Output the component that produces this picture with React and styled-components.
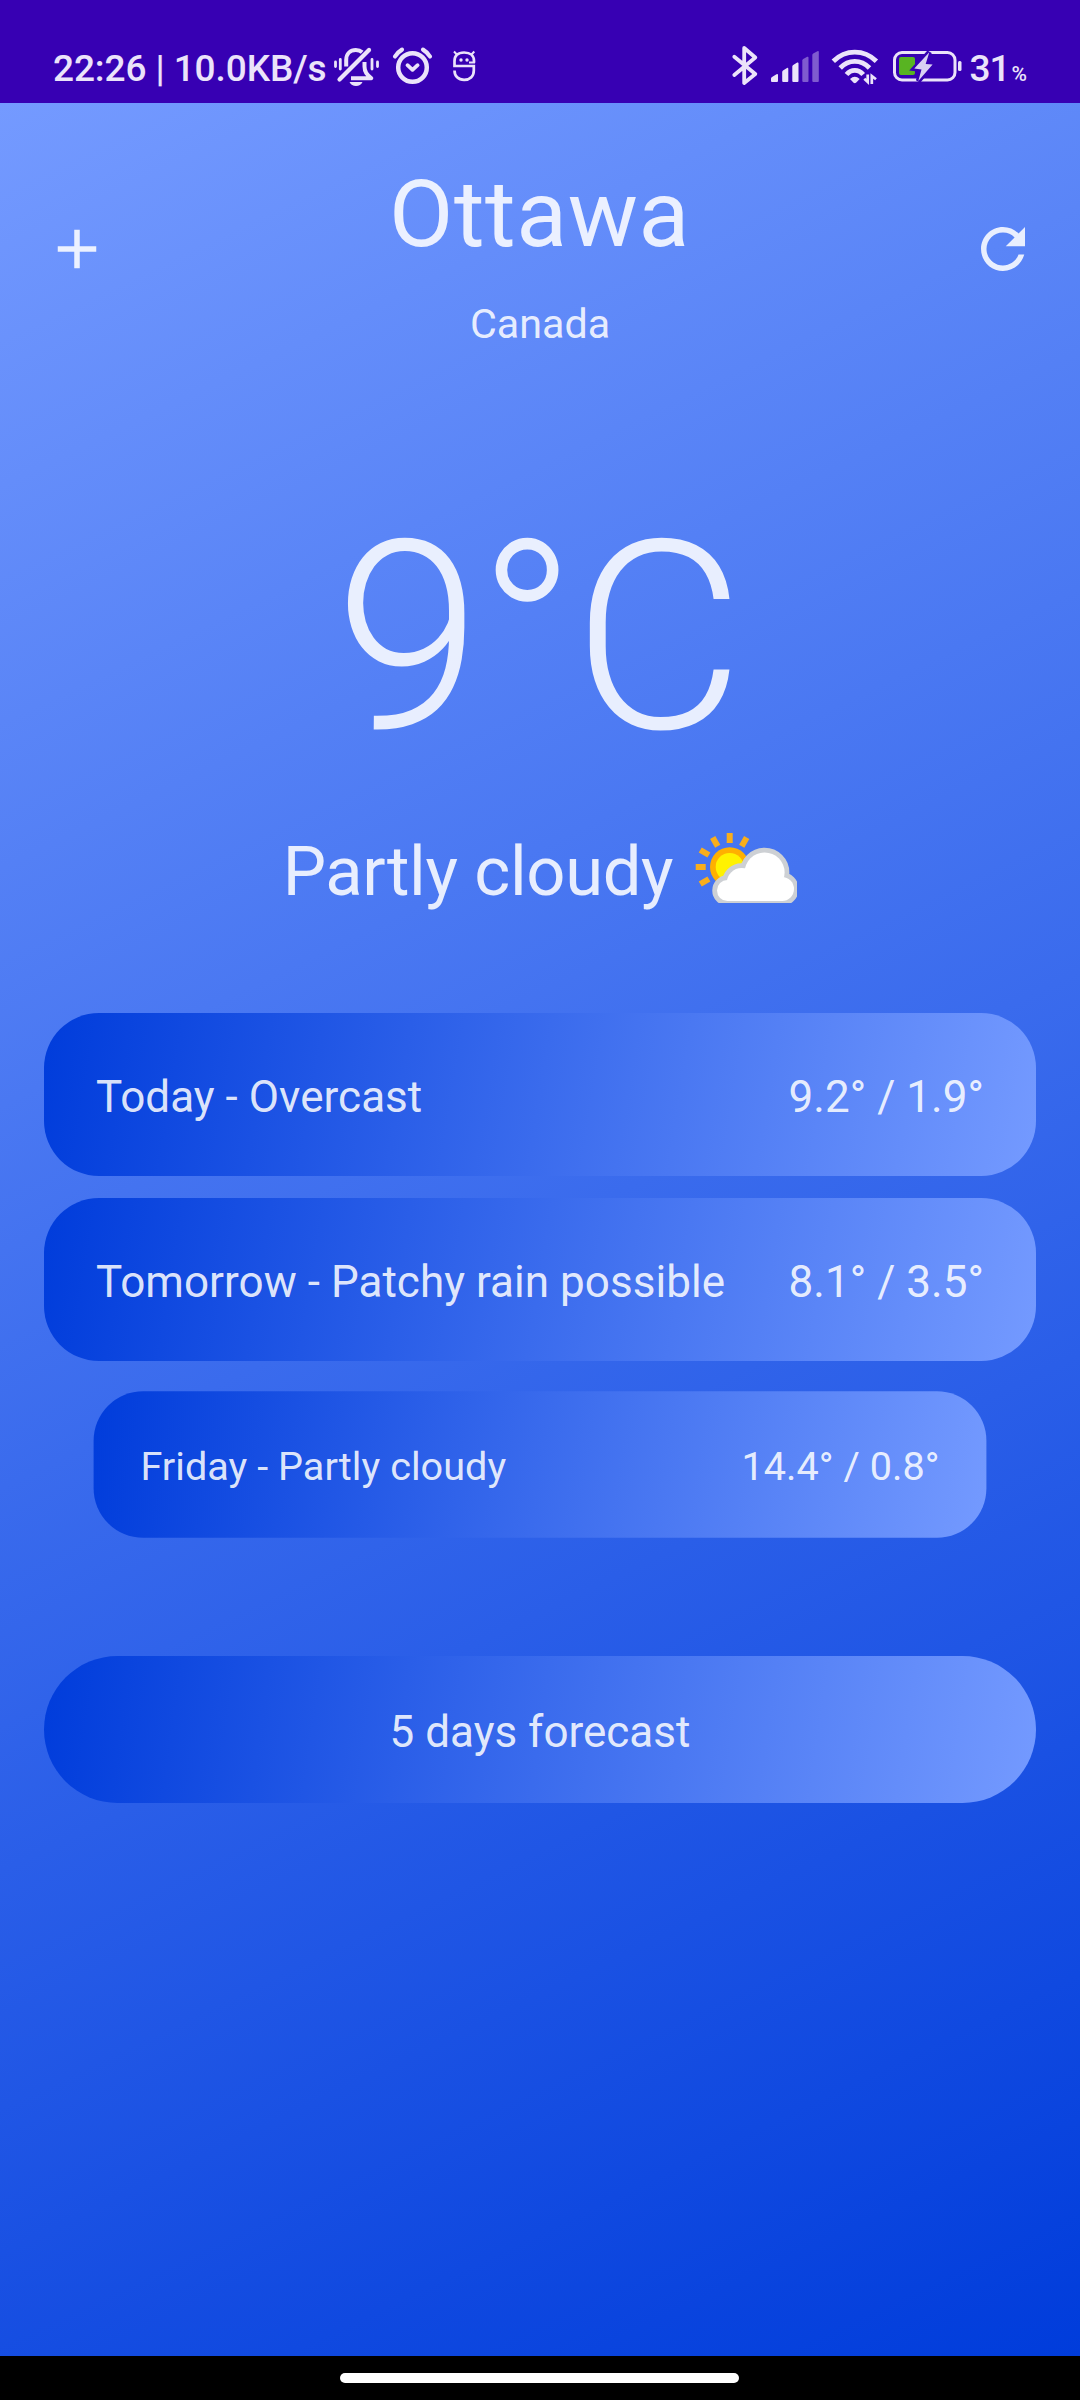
import React from "react";
import styled, { createGlobalStyle } from "styled-components";

const INK = "#ebe3fa";

const GlobalStyle = createGlobalStyle`
  * { box-sizing: border-box; }
  body { margin: 0; background: #000; }
`;

const Screen = styled.div`
  display: flex;
  flex-direction: column;
  width: 1080px;
  height: 2400px;
  overflow: hidden;
  font-family: Roboto, "Noto Sans", sans-serif;
  color: rgba(255, 255, 255, 0.87);
`;

const StatusBar = styled.header`
  display: flex;
  justify-content: space-between;
  height: 103px;
  padding: 46px 53px 0;
  background: #3700b3;
  color: ${INK};
`;

const StatusGroup = styled.div`
  display: flex;
  align-items: flex-start;
`;

const Clock = styled.span`
  width: 281px;
  font-size: 37px;
  font-weight: 500;
  line-height: 45px;
  letter-spacing: -0.1px;
  white-space: nowrap;
`;

const Percent = styled.span`
  margin-left: 6px;
  font-size: 37px;
  font-weight: 500;
  line-height: 45px;
  letter-spacing: -1px;
  white-space: nowrap;

  small {
    margin-left: 2px;
    font-size: 21px;
    letter-spacing: 0;
  }
`;

const Glyph = styled.svg`
  display: block;
  flex: none;
  width: ${(p) => p.$w}px;
  height: ${(p) => p.$h}px;
  margin: ${(p) => p.$top || 0}px 0 0 ${(p) => p.$left || 0}px;
  overflow: visible;
`;

const Weather = styled.main`
  display: flex;
  flex-direction: column;
  height: 2253px;
  padding: 47px 44px 0;
  background: linear-gradient(154.4deg, #749aff, #003cdb);
`;

const TopBar = styled.div`
  display: flex;
  align-items: center;
  justify-content: space-between;
  height: 198px;
`;

const IconButton = styled.button`
  display: flex;
  padding: 0;
  border: 0;
  background: none;
  color: inherit;

  svg {
    width: 66px;
    height: 66px;
    fill: currentColor;
  }
`;

const Place = styled.div`
  display: flex;
  flex-direction: column;
  align-items: center;
  gap: 31px;
  padding-top: 9px;
`;

const City = styled.h1`
  margin: 0;
  padding-right: 1px;
  font-size: 93.5px;
  font-weight: 400;
  line-height: 110px;
  letter-spacing: 0.6px;
`;

const Country = styled.span`
  font-size: 41.25px;
  line-height: 48px;
`;

const Temperature = styled.div`
  margin-top: 135px;
  padding-right: 5px;
  font-size: 264px;
  font-weight: 325;
  line-height: 310px;
  letter-spacing: -4.125px;
  text-align: center;
`;

const Condition = styled.div`
  display: flex;
  align-items: flex-start;
  justify-content: center;
  margin-top: 39px;
  font-size: 68.75px;
  line-height: 80px;
  letter-spacing: -0.36px;
`;

const Days = styled.ul`
  display: flex;
  flex-direction: column;
  gap: 22px;
  margin: 101px 0 0;
  padding: 0;
  list-style: none;
`;

const Day = styled.li`
  display: flex;
  align-items: center;
  justify-content: space-between;
  height: 163px;
  padding: 4px 52px 0;
  border-radius: 55px;
  background: linear-gradient(99.3deg, #003cdb, #749aff);
  font-size: 44px;
  line-height: 52px;
  letter-spacing: 0.04px;
  transform: scale(${(p) => p.$scale});
`;

const ForecastButton = styled.button`
  height: 147px;
  margin-top: 110px;
  padding: 4px 0 0;
  border: 0;
  border-radius: 74px;
  background: linear-gradient(98.4deg, #003cdb, #749aff);
  color: inherit;
  font: 400 44px/52px Roboto, "Noto Sans", sans-serif;
`;

const NavBar = styled.footer`
  display: flex;
  justify-content: center;
  height: 44px;
  padding: 17px 1px 0 0;
  background: #000;
`;

const HomeHandle = styled.div`
  width: 399px;
  height: 10px;
  border-radius: 5px;
  background: #fff;
`;

const days = [
  { label: "Today - Overcast", range: "9.2° / 1.9°", scale: 1 },
  { label: "Tomorrow - Patchy rain possible", range: "8.1° / 3.5°", scale: 1 },
  { label: "Friday - Partly cloudy", range: "14.4° / 0.8°", scale: 0.9 },
];

function SilentIcon() {
  return (
    <Glyph $w={46} $h={40} $top={2} viewBox="0 0 46 40" fill="none" stroke={INK} strokeLinecap="round">
      <path d="M12.2 18.5V12C12.2 5.500 16.500 2 21.800 2C24.500 2 26.500 2.700 28.200 4.300" strokeWidth="4" strokeLinecap="butt" />
      <path d="M5.500 31.500L35 2" strokeWidth="4.200" />
      <path d="M30.500 14V18.500C30.500 24 33 26.500 37.300 30.300H17" strokeWidth="4" strokeLinejoin="round" strokeLinecap="butt" />
      <path d="M15.500 34H28.500C26.500 39.300 17.500 39.300 15.500 34Z" fill={INK} stroke="none" />
      <path d="M1.500 14V18.500M6.300 11.500V21M38 11.500V21M43.500 14V18.500" strokeWidth="2.800" />
    </Glyph>
  );
}

function AlarmIcon() {
  return (
    <Glyph $w={42} $h={40} $left={12} viewBox="0 0 42 40" fill="none" stroke={INK} strokeLinecap="round" strokeLinejoin="round">
      <circle cx="20.500" cy="21.500" r="14.300" strokeWidth="4.500" />
      <path d="M15.500 19.200L20.500 23.800L25.600 19.200" strokeWidth="3.800" />
      <path d="M3 10.500Q5.500 6.300 10 3.600M31 3.600Q35.500 6.300 38 10.500" strokeWidth="4.200" />
    </Glyph>
  );
}

function RobotIcon() {
  return (
    <Glyph $w={24} $h={32} $left={18} $top={4} viewBox="0 0 24 32" fill="none" stroke={INK} strokeWidth="2.700">
      <path d="M22 12.700V11C22 5.500 18.500 2.500 12.100 2.500C5.700 2.500 2.500 5.500 2.500 11V16H21.800V20.500C21.800 26.500 17.800 29.800 12.100 29.800C6.300 29.800 2.500 26.300 2.500 20.500" />
      <path d="M23 12.600H17M2 1.500L4.800 4.500M22.300 1.500L19.500 4.500" strokeWidth="2" />
      <circle cx="9" cy="10" r="1.700" fill={INK} stroke="none" />
      <circle cx="15" cy="10" r="1.700" fill={INK} stroke="none" />
    </Glyph>
  );
}

function BluetoothIcon() {
  return (
    <Glyph $w={26} $h={39} viewBox="0 0 26 39" fill="none" stroke={INK} strokeWidth="3.800" strokeLinecap="round" strokeLinejoin="round">
      <path d="M2.300 10.800L23.300 28L12.200 37V2L23.300 11.500L2.300 29" />
    </Glyph>
  );
}

function SignalIcon() {
  return (
    <Glyph $w={50} $h={33} $left={12} $top={4} viewBox="0 0 50 33" fill={INK}>
      <path d="M1 31V28.500Q1 27.500 2 27L6.500 24.200Q8 23.500 8 25V31Q8 32 7 32H2Q1 32 1 31Z" />
      <path d="M12.200 31V22Q12.200 21 13 20.500L17 18Q18.300 17.300 18.300 19V31Q18.300 32 17.300 32H13.200Q12.200 32 12.200 31Z" />
      <path d="M22.300 31V16.500Q22.300 15.500 23.200 15L27.200 12.600Q28.500 12 28.500 13.500V31Q28.500 32 27.500 32H23.300Q22.300 32 22.300 31Z" />
      <g opacity="0.400">
        <path d="M32.300 31V10.500Q32.300 9.500 33.200 9L37.200 6.800Q38.500 6.200 38.500 7.700V31Q38.500 32 37.500 32H33.300Q32.300 32 32.300 31Z" />
        <path d="M42.300 31V5Q42.300 4 43.200 3.500L47.400 1.200Q48.800 .6 48.800 2V31Q48.800 32 47.800 32H43.300Q42.300 32 42.300 31Z" />
      </g>
    </Glyph>
  );
}

function WifiIcon() {
  return (
    <Glyph $w={48} $h={37} $left={11} $top={2} viewBox="0 0 48 37" fill="none" stroke={INK} strokeWidth="4.800">
      <path d="M2.300 13.300Q11.500 4.200 23.800 4.200T45.400 13.300" />
      <path d="M9.200 20Q15.500 13.400 23.800 13.400T38.500 20" />
      <path d="M15.500 26.500Q19 22.300 23.800 22.300T32.200 26.500" />
      <path d="M19 31Q23.800 26.500 28.700 31L25 34.700Q23.800 35.600 22.600 34.700Z" fill={INK} stroke="none" />
      <path d="M36.700 26.500V34L33.300 30.800M40.800 36V28L45 31.300" strokeWidth="2.700" />
    </Glyph>
  );
}

function BatteryIcon() {
  const bolt = "M37.300 2.300L22.300 18.600L29.500 19.500L26.300 31L40.600 14.600L33.700 14Z";
  return (
    <Glyph $w={71} $h={32} $left={13} $top={4} viewBox="0 0 71 32" fill="none">
      <rect x="2.500" y="2.500" width="60.500" height="27.500" rx="7.500" stroke={INK} strokeWidth="3" />
      <rect x="7" y="7" width="16" height="18" rx="2" fill="#58b422" />
      <path d={bolt} stroke="#3700b3" strokeWidth="5" />
      <path d={bolt} fill="#d9d0f3" />
      <rect x="66" y="11" width="3.500" height="10" rx="1.500" fill={INK} />
    </Glyph>
  );
}

function CloudShape(props) {
  return (
    <g {...props}>
      <circle cx="69.600" cy="40.500" r="20" />
      <circle cx="46.700" cy="51" r="15" />
      <circle cx="32.500" cy="58.500" r="10.500" />
      <circle cx="87" cy="57" r="12" />
      <rect x="32" y="50" width="56" height="19" />
    </g>
  );
}

function PartlyCloudyIcon() {
  return (
    <Glyph $w={102} $h={71} $left={22} $top={0} viewBox="0 0 102 71">
      <clipPath id="frame">
        <rect width="102" height="71" />
      </clipPath>
      <g clipPath="url(#frame)">
        {[-120, -90, -60, -30, 0, 30].map((turn) => (
          <rect key={turn} x="31.700" y="1" width="6" height="10" fill="#f9ae1c" transform={`rotate(${turn} 34.700 35)`} />
        ))}
        <circle cx="34.700" cy="35" r="19.700" fill="#ffb000" />
        <circle cx="34.700" cy="35" r="14" fill="#fff200" />
        <CloudShape fill="#cdd0d4" stroke="#cdd0d4" strokeWidth="9.500" />
        <CloudShape fill="#fff" />
      </g>
    </Glyph>
  );
}

export default function App() {
  return (
    <Screen>
      <GlobalStyle />
      <StatusBar>
        <StatusGroup>
          <Clock>22:26 | 10.0KB/s</Clock>
          <SilentIcon />
          <AlarmIcon />
          <RobotIcon />
        </StatusGroup>
        <StatusGroup>
          <BluetoothIcon />
          <SignalIcon />
          <WifiIcon />
          <BatteryIcon />
          <Percent>
            31<small>%</small>
          </Percent>
        </StatusGroup>
      </StatusBar>
      <Weather>
        <TopBar>
          <IconButton aria-label="Add">
            <svg viewBox="0 0 24 24">
              <path d="M19 13h-6v6h-2v-6H5v-2h6V5h2v6h6v2z" />
            </svg>
          </IconButton>
          <Place>
            <City>Ottawa</City>
            <Country>Canada</Country>
          </Place>
          <IconButton aria-label="Refresh">
            <svg viewBox="0 0 24 24">
              <path d="M17.650 6.350C16.200 4.900 14.210 4 12 4c-4.420 0-7.990 3.580-7.990 8s3.570 8 7.990 8c3.730 0 6.840-2.550 7.730-6h-2.080c-.82 2.330-3.040 4-5.650 4-3.310 0-6-2.690-6-6s2.690-6 6-6c1.660 0 3.140.69 4.220 1.780L13 11h7V4l-2.350 2.350z" />
            </svg>
          </IconButton>
        </TopBar>
        <Temperature>9°C</Temperature>
        <Condition>
          Partly cloudy
          <PartlyCloudyIcon />
        </Condition>
        <Days>
          {days.map((day) => (
            <Day key={day.label} $scale={day.scale}>
              <span>{day.label}</span>
              <span>{day.range}</span>
            </Day>
          ))}
        </Days>
        <ForecastButton>5 days forecast</ForecastButton>
      </Weather>
      <NavBar>
        <HomeHandle />
      </NavBar>
    </Screen>
  );
}
